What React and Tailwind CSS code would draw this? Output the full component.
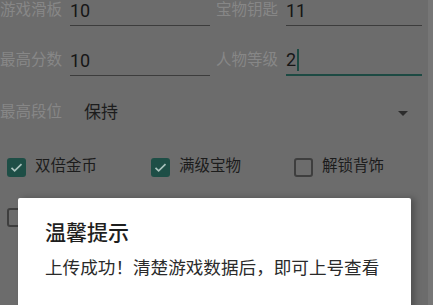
import { useState } from 'react'

const FONT = { fontFamily: "Roboto, 'Noto Sans CJK SC', 'Noto Sans', sans-serif" }

function Field({ label, value, focused }) {
  return (
    <div className="flex items-center h-[50px]">
      <span className="w-[70px] shrink-0 text-[15.5px] text-[#878787] whitespace-nowrap">{label}</span>
      <div
        className={`flex-1 h-[30px] flex items-center mr-[6px] ${focused ? 'border-b-[2px] border-[#1d4a43]' : 'border-b-[1.5px] border-[#3c3c3c]'}`}
      >
        <span className="text-[18px] leading-none text-[#161616]">{value}</span>
        {focused && <span className="w-[2px] h-[22px] bg-[#1d4a43] ml-[1px]"></span>}
      </div>
    </div>
  )
}

function Check({ label, checked }) {
  return (
    <div className="flex items-center gap-[9px]">
      <div
        className={`w-[19px] h-[19px] rounded-[3px] flex items-center justify-center ${checked ? 'bg-[#1e4e46]' : 'border-[2px] border-[#3e3e3e]'}`}
      >
        {checked && (
          <svg width="15" height="15" viewBox="0 0 24 24" fill="none">
            <path d="M4 12.5l5 5L20 6.5" stroke="#a9c2bd" strokeWidth="2.6" />
          </svg>
        )}
      </div>
      {label && <span className="text-[15.5px] text-[#1c1c1c]">{label}</span>}
    </div>
  )
}

export default function App() {
  const [level] = useState('2')

  return (
    <div className="relative w-[433px] h-[305px] overflow-hidden flex bg-[#6c6c6c]" style={FONT}>
      <div className="w-[428px] shrink-0 -mt-[14px]">
        {/* Inputs */}
        <div className="grid grid-cols-[216px_212px]">
          <Field label="游戏滑板" value="10" />
          <Field label="宝物钥匙" value="11" />
          <Field label="最高分数" value="10" />
          <Field label="人物等级" value={level} focused />
        </div>

        {/* Spinner */}
        <div className="flex items-center h-[54px]">
          <span className="w-[84px] text-[15.5px] text-[#878787]">最高段位</span>
          <span className="flex-1 text-[17px] text-[#1c1c1c]">保持</span>
          <svg width="10" height="5" viewBox="0 0 10 5" className="mr-[20px]">
            <path d="M0 0h10L5 5z" fill="#2c2c2c" />
          </svg>
        </div>

        {/* Checkboxes */}
        <div className="grid grid-cols-[144px_143px_141px] h-[54px] items-center pl-[7px]">
          <Check label="双倍金币" checked />
          <Check label="满级宝物" checked />
          <Check label="解锁背饰" />
        </div>
        <div className="grid grid-cols-[144px_143px_141px] h-[46px] items-center pl-[7px]">
          <Check />
        </div>
      </div>
      <div className="flex-1 bg-[#767676]"></div>

      {/* Dialog */}
      <div className="absolute left-[18px] top-[198px] w-[393px] h-[140px] bg-white rounded-[2px] shadow-[4px_0_6px_rgba(0,0,0,0.25)] pl-[27px] pt-[21px]">
        <div className="text-[21px] leading-[28px] font-medium text-[#1e1e1e]">温馨提示</div>
        <div className="mt-[9px] text-[17.6px] leading-[24px] text-[#2a2a2a] whitespace-nowrap">
          上传成功！清楚游戏数据后，即可上号查看
        </div>
      </div>
    </div>
  )
}
